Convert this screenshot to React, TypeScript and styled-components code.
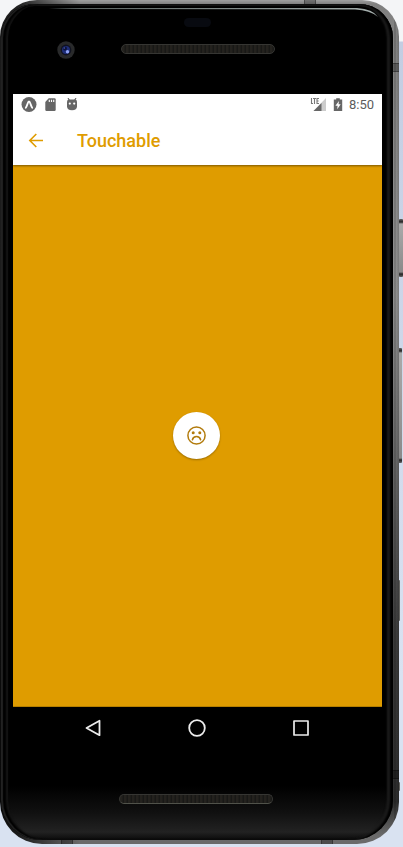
import React from "react";
import styled, { createGlobalStyle } from "styled-components";

const AMBER = "#df9c00";

const GlobalStyle = createGlobalStyle`
  * { box-sizing: border-box; }
  body { margin: 0; font-family: Roboto, "Noto Sans", sans-serif; }
`;

const Page = styled.div`
  position: relative;
  display: flex;
  min-height: 100vh;
  padding: 0 4px 3px 0;
  overflow: hidden;
  background: linear-gradient(to bottom, #f4f5f7 0, #f4f5f7 41px, #c3cde2 42px, #d9e2f1 80%);
`;

const Frame = styled.div`
  position: relative;
  flex: 1;
  display: flex;
  padding: 4px 6px 4px 1px;
  border-radius: 37px 37px 42px 42px;
  background:
    linear-gradient(to right, transparent calc(100% - 5px), rgba(0, 0, 0, 0.3) calc(100% - 4px), transparent calc(100% - 3px), rgba(0, 0, 0, 0.15)),
    linear-gradient(to right, rgba(0, 0, 0, 0.8) 0, rgba(0, 0, 0, 0.75) 18px, rgba(0, 0, 0, 0) 20%),
    linear-gradient(to bottom, #a0a0a0 0, #808080 4px, #909090 35%, #666 55%, #3c3c3c 75%, #2c2c2c 95%, #6a6a6a 99%);
`;

const Glass = styled.div`
  flex: 1;
  display: flex;
  flex-direction: column;
  min-width: 0;
  padding: 0 11px 0 12px;
  border-radius: 34px 34px 40px 40px;
  background: linear-gradient(to bottom, #000 0, #000 calc(100% - 54px), #101010 calc(100% - 28px), #222 calc(100% - 8px), #0a0a0a 100%);
  box-shadow:
    inset 2px 0 1px #222,
    inset -3px 0 2px #000,
    inset -6px 0 2px #1c1c1c,
    inset 5px 0 2px #000,
    inset 7px 0 1px #161616,
    inset 0 2px 1px #181818;
`;

const SideKey = styled.span<{ $top: number; $height: number; $right: number; $dark?: boolean }>`
  position: absolute;
  top: ${(p) => p.$top}px;
  right: ${(p) => p.$right}px;
  width: 4px;
  height: ${(p) => p.$height}px;
  border-radius: 1px;
  background: ${(p) =>
    p.$dark
      ? "#62625f"
      : "linear-gradient(to bottom, #666 0, #222 3px, #aaa 5px, #8a8a8a calc(100% - 5px), #222 calc(100% - 3px), #666 100%)"};
`;

const Seam = styled.span<{ $edge: "top" | "bottom" | "right"; $at: number }>`
  position: absolute;
  ${(p) =>
    p.$edge === "right"
      ? `right: 0; top: ${p.$at}px; width: 6px; height: 9px;`
      : `${p.$edge}: 0; left: ${p.$at}px; width: 12px; height: 4px;`}
  background: rgba(0, 0, 0, 0.28);
  border: 0 solid rgba(0, 0, 0, 0.3);
  border-width: ${(p) => (p.$edge === "right" ? "1px 0" : "0 1px")};
`;

const TopBezel = styled.header`
  position: relative;
  height: 90px;
  flex: none;
  display: flex;
  justify-content: center;
  padding-top: 40px;
`;

const Glare = styled.svg`
  position: absolute;
  top: 3px;
  left: 36px;
  width: calc(100% - 32px);
  height: 12px;
`;

const Sensor = styled.span`
  position: absolute;
  top: 14px;
  left: calc(50% - 14px);
  width: 27px;
  height: 9px;
  border-radius: 5px;
  background: #080a10;
`;

const Camera = styled.svg`
  position: absolute;
  top: 37px;
  left: 44px;
  width: 18px;
  height: 18px;
`;

const Speaker = styled.span`
  width: 154px;
  height: 10px;
  border: 1px solid #363633;
  border-radius: 5px;
  background: repeating-linear-gradient(to right, #24221e 0, #24221e 2px, #181816 3px, #181816 4px);
`;

const Screen = styled.main`
  flex: 1;
  display: flex;
  flex-direction: column;
`;

const StatusBar = styled.div`
  position: relative;
  z-index: 1;
  display: flex;
  align-items: center;
  justify-content: space-between;
  height: 22px;
  padding: 0 8px;
  background: #fff;
  color: #5c5c5c;
  font-size: 13px;
  line-height: 16px;
`;

const StatusGroup = styled.div<{ $gap: number }>`
  display: flex;
  align-items: center;
  gap: ${(p) => p.$gap}px;
`;

const AppBar = styled.div`
  position: relative;
  display: flex;
  align-items: center;
  gap: 30px;
  height: 49px;
  padding: 0 12px;
  background: #fff;
  box-shadow: 0 1px 2px rgba(0, 0, 0, 0.45);
`;

const IconButton = styled.button`
  display: grid;
  place-items: center;
  width: 22px;
  height: 22px;
  padding: 0;
  border: 0;
  background: none;
  color: inherit;
  cursor: pointer;
`;

const BackButton = styled(IconButton)`
  color: ${AMBER};
`;

const Title = styled.h1`
  margin: 0;
  color: ${AMBER};
  font-size: 18px;
  font-weight: 500;
  line-height: 24px;
`;

const Content = styled.section`
  flex: 1;
  display: grid;
  place-items: center;
  padding-right: 2px;
  background: ${AMBER};
  border-bottom: 1px solid #b57f00;
`;

const RoundButton = styled.button`
  display: grid;
  place-items: center;
  width: 47px;
  height: 47px;
  padding: 0;
  border: 0;
  border-radius: 50%;
  background: #fff;
  color: #b27b0c;
  box-shadow: 0 1px 2px rgba(0, 0, 0, 0.3);
  cursor: pointer;
`;

const NavBar = styled.nav`
  display: flex;
  justify-content: center;
  gap: 82px;
  padding: 10px 2px 10px 0;
  color: #ececec;
`;

const BottomBezel = styled.footer`
  display: flex;
  justify-content: center;
  height: 91px;
  padding: 45px 4px 0 0;
`;

const BottomSpeaker = styled(Speaker)`
  border-bottom-color: #50524a;
`;

export default function App() {
  return (
    <>
      <GlobalStyle />
      <Page>
        <SideKey $top={219} $height={58} $right={0} />
        <SideKey $top={348} $height={115} $right={1} />
        <SideKey $top={580} $height={41} $right={3} $dark />
        <SideKey $top={782} $height={9} $right={3} $dark />
        <Frame>
          <Seam $edge="top" $at={304} />
          <Seam $edge="right" $at={63} />
          <Seam $edge="right" $at={770} />
          <Seam $edge="bottom" $at={61} />
          <Seam $edge="bottom" $at={321} />
          <Glass>
            <TopBezel>
              <Glare viewBox="0 0 337 12" preserveAspectRatio="none" aria-hidden="true">
                <defs>
                  <linearGradient id="glare" x1="0" x2="1" y1="0" y2="0">
                    <stop offset="0" stopColor="#9aa" stopOpacity="0" />
                    <stop offset="0.1" stopColor="#5c6462" />
                    <stop offset="1" stopColor="#a6b0ae" />
                  </linearGradient>
                </defs>
                <path d="M0 1H308Q324 2 329 10Q321 3 306 2.5L0 2Z" fill="url(#glare)" />
              </Glare>
              <Sensor />
              <Camera viewBox="0 0 18 18" aria-hidden="true">
                <circle cx="9" cy="9" r="8.7" fill="#292a2b" />
                <circle cx="9" cy="9" r="5.4" fill="#10121f" />
                <circle cx="9" cy="9" r="4" fill="#1e2d78" />
                <circle cx="8" cy="7.5" r="2" fill="#0d1337" />
                <circle cx="7.2" cy="7" r="0.7" fill="#526ae0" />
                <circle cx="10.5" cy="10.8" r="1.7" fill="#8fa2f4" />
              </Camera>
              <Speaker />
            </TopBezel>

            <Screen>
              <StatusBar>
                <StatusGroup $gap={8}>
                  <svg width="16" height="16" viewBox="0 0 16 16" aria-hidden="true">
                    <circle cx="8" cy="7.5" r="7.5" fill="#666" />
                    <path d="M4.8 10.7C6.2 9 6.8 4.5 8 4.5S9.8 9 11.2 10.7" fill="none" stroke="#fff" strokeWidth="1.8" strokeLinecap="round" strokeLinejoin="round" />
                  </svg>
                  <svg width="12" height="14" viewBox="0 0 12 14" aria-hidden="true">
                    <path d="M3.7 .3H9.5Q10.7 .3 10.7 1.5V11.8Q10.7 13 9.5 13H1.5Q.3 13 .3 11.8V3.9Z" fill="#666" />
                    <path d="M4.3 1.7v2.4M6.5 1.7v2.4M8.7 1.7v2.4" stroke="#fff" strokeWidth="1.1" />
                  </svg>
                  <svg width="14" height="14" viewBox="0 0 14 14" aria-hidden="true">
                    <path d="M3 0l1.4 2.4M11 0L9.6 2.4" stroke="#666" strokeWidth="1.1" />
                    <path d="M2 3.8Q2 1.6 4.2 1.6H9.8Q12 1.6 12 3.8V8.6Q12 12.2 7 12.2T2 8.6Z" fill="#666" />
                    <circle cx="4.8" cy="5.6" r="1.1" fill="#fff" />
                    <circle cx="9.2" cy="5.6" r="1.1" fill="#fff" />
                  </svg>
                </StatusGroup>
                <StatusGroup $gap={6}>
                  <svg width="18" height="16" viewBox="0 0 18 16" role="img" aria-label="LTE signal">
                    <path d="M17 1V14H4.5Z" fill="#ccc" />
                    <path d="M12.5 6V14H4.5Z" fill="#666" />
                    <path d="M1 1h9.5v6H1z" fill="#fff" />
                    <path d="M2.5 1v5.5h1.5M4 1.5h3M5.5 1.5V7M10 1.5H8V6.5H10M8 4H9.6" fill="none" stroke="#777" strokeWidth="1.1" />
                  </svg>
                  <svg width="10" height="16" viewBox="0 0 10 16" role="img" aria-label="Battery charging">
                    <path d="M3.2 1.2h3.6v1.3H9.2V14H.8V2.5H3.2Z" fill="#666" />
                    <path d="M6 4L2.4 8.8H4.6L4.2 12.3L7.7 7.3H5.5Z" fill="#fff" />
                  </svg>
                  <span>8:50</span>
                </StatusGroup>
              </StatusBar>

              <AppBar>
                <BackButton type="button" aria-label="Back">
                  <svg width="16" height="16" viewBox="0 0 16 16" fill="none" stroke="currentColor" strokeWidth="1.6">
                    <path d="M15 7.5H2M8.3 1L1.8 7.5L8.3 14" />
                  </svg>
                </BackButton>
                <Title>Touchable</Title>
              </AppBar>

              <Content>
                <RoundButton type="button" aria-label="Sad face">
                  <svg width="21" height="21" viewBox="0 0 21 21" fill="none" stroke="currentColor">
                    <circle cx="10.5" cy="10.5" r="8.6" strokeWidth="1.5" />
                    <path d="M6.4 14.8Q7.2 11.6 10.5 11.6T14.6 14.8" strokeWidth="1.5" strokeLinecap="round" />
                    <circle cx="7.2" cy="7.8" r="1.5" fill="currentColor" stroke="none" />
                    <circle cx="13.8" cy="7.8" r="1.5" fill="currentColor" stroke="none" />
                  </svg>
                </RoundButton>
              </Content>
            </Screen>

            <NavBar aria-label="System navigation">
              <IconButton type="button" aria-label="Back">
                <svg width="20" height="20" viewBox="0 0 20 20" fill="none" stroke="currentColor" strokeWidth="1.8" strokeLinejoin="round">
                  <path d="M16.5 2.8V17.2L3.5 10Z" />
                </svg>
              </IconButton>
              <IconButton type="button" aria-label="Home">
                <svg width="20" height="20" viewBox="0 0 20 20" fill="none" stroke="currentColor" strokeWidth="1.8">
                  <circle cx="10" cy="10" r="7.8" />
                </svg>
              </IconButton>
              <IconButton type="button" aria-label="Recent apps">
                <svg width="20" height="20" viewBox="0 0 20 20" fill="none" stroke="currentColor" strokeWidth="1.7" strokeLinejoin="round">
                  <rect x="3" y="3" width="14" height="14" />
                </svg>
              </IconButton>
            </NavBar>

            <BottomBezel>
              <BottomSpeaker />
            </BottomBezel>
          </Glass>
        </Frame>
      </Page>
    </>
  );
}
